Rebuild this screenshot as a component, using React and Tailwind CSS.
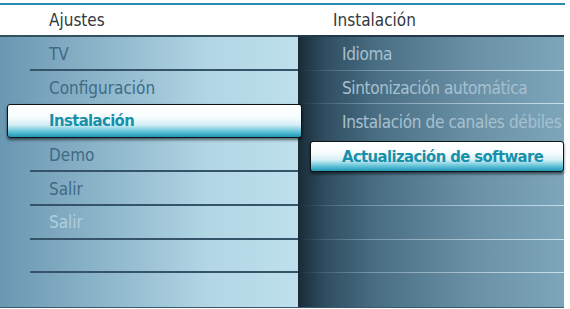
import React from 'react';

const font = { fontFamily: '"DejaVu Sans Condensed", "DejaVu Sans", sans-serif', fontStretch: 'condensed' };

const leftItems = ['TV', 'Configuración', 'Instalación', 'Demo', 'Salir', 'Salir', '', ''];
const rightItems = ['Idioma', 'Sintonización automática', 'Instalación de canales débiles', 'Actualización de software', '', '', '', ''];

function SelectedBox({ label, className }) {
  return (
    <div
      className={`relative z-10 flex items-center rounded-[3px] border border-[#0d1418] bg-[linear-gradient(to_bottom,#ffffff_0%,#f6fcfd_40%,#d4eef5_62%,#5cc0d6_84%,#2198b5_100%)] shadow-[0_2px_3px_rgba(0,0,0,0.55)] ${className}`}
    >
      <span className="whitespace-nowrap text-[16.5px] font-bold tracking-[-0.6px] text-[#1790ab]">{label}</span>
    </div>
  );
}

export default function App() {
  return (
    <div className="w-[570px] h-[309px] bg-white overflow-hidden" style={font}>
      <div className="pt-[3px]">
        <div className="h-[2px] w-[565px] bg-[#2a8bb6]" />
      </div>
      <div className="flex w-[564px]">
        {/* Ajustes */}
        <div className="w-[298px] flex flex-col">
          <div className="h-[30px] flex items-center pl-[49px] pt-[2px] text-[17px] text-[#34393d]">Ajustes</div>
          <div className="h-[273px] border-t-2 border-[#33505f] border-b border-b-[#3d5866] bg-[linear-gradient(to_right,#6a97b2_0%,#8db6ca_35%,#b2d6e4_70%,#bde0ec_100%)] flex flex-col">
            {leftItems.map((item, i) =>
              i === 2 ? (
                <div key={i} className="h-[34px] flex flex-col">
                  <SelectedBox label={item} className="ml-[7px] w-[295px] h-[34px] -mt-[1px] pl-[41px] pt-[2px]" />
                </div>
              ) : (
                <div key={i} className="h-[34px] flex flex-col">
                  <div className="flex-1 flex items-center pl-[49px] pt-[3px]">
                    <span
                      className={`whitespace-nowrap text-[17px] ${i === 5 ? 'text-[#b0cedd]' : 'text-[#406a85]'}`}
                    >
                      {item}
                    </span>
                  </div>
                  {i !== 1 && i !== 7 && <div className="ml-[30px] h-[2px] bg-[#35546a]" />}
                </div>
              )
            )}
          </div>
        </div>
        {/* Instalación */}
        <div className="w-[266px] flex flex-col">
          <div className="h-[30px] flex items-center pl-[35px] pt-[2px] text-[17px] text-[#34393d]">Instalación</div>
          <div className="h-[273px] border-t-2 border-[#22394a] border-b border-b-[#3d5866] bg-[linear-gradient(to_right,#182b37_0%,#2f4d60_10%,#4a6f84_30%,#6990a5_65%,#7ea6ba_100%)] flex flex-col">
            {rightItems.map((item, i) =>
              i === 3 ? (
                <div key={i} className="h-[34px] flex flex-col">
                  <SelectedBox label={item} className="ml-[12px] w-[254px] h-[36px] mt-[3px] pl-[31px] pt-[1px]" />
                </div>
              ) : (
                <div key={i} className="h-[34px] flex flex-col">
                  <div className="flex-1 flex items-center pl-[44px] pt-[3px]">
                    <span className="whitespace-nowrap text-[17px] tracking-[-0.35px] text-[#a6c1d0]">{item}</span>
                  </div>
                  {i !== 2 && i !== 7 && (
                    <div className="h-[1px] bg-[linear-gradient(to_right,rgba(200,222,234,0)_0%,rgba(200,222,234,0.35)_25%,rgba(215,232,241,0.85)_100%)]" />
                  )}
                </div>
              )
            )}
          </div>
        </div>
      </div>
    </div>
  );
}
